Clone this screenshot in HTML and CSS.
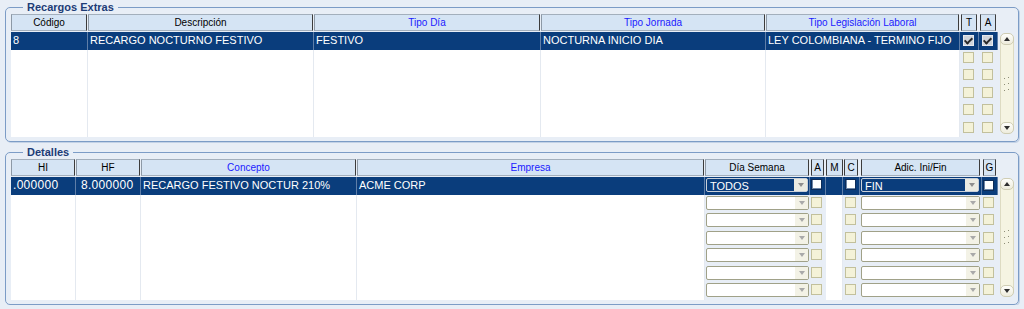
FILE: index.html
```html
<!DOCTYPE html>
<html lang="es">
<head>
    <meta charset="UTF-8">
    <title>Recargos Extras</title>
    <link rel="stylesheet" href="styles.css">
</head>
<body>
    <fieldset class="panel">
        <legend>Recargos Extras</legend>
        <div class="grid extras">
            <div class="head">Código</div>
            <div class="head">Descripción</div>
            <div class="head blue">Tipo Día</div>
            <div class="head blue">Tipo Jornada</div>
            <div class="head blue">Tipo Legislación Laboral</div>
            <div class="head small">T</div>
            <div class="head small">A</div>
            <div></div>
            <div class="scroll">
                <span class="sb up"></span>
                <svg class="grip" width="8" height="18" viewBox="0 0 8 18">
                    <path d="M1 4 L2 3 M5 3 L6 2 M1 10 L2 9 M5 9 L6 8 M1 16 L2 15 M5 15 L6 14" stroke="#8e8e78" stroke-width="1"/>
                </svg>
                <span class="sb down"></span>
            </div>

            <div class="row sel">
                <div class="cell">8</div>
                <div class="cell">RECARGO NOCTURNO FESTIVO</div>
                <div class="cell">FESTIVO</div>
                <div class="cell">NOCTURNA INICIO DIA</div>
                <div class="cell">LEY COLOMBIANA - TERMINO FIJO</div>
                <div class="chk mid"><span class="box checked"></span></div>
                <div class="chk mid"><span class="box checked"></span></div>
            </div>
            <div class="row">
                <div class="cell"></div><div class="cell"></div><div class="cell"></div><div class="cell"></div><div class="cell"></div>
                <div class="chk"><span class="box"></span></div>
                <div class="chk"><span class="box"></span></div>
            </div>
            <div class="row">
                <div class="cell"></div><div class="cell"></div><div class="cell"></div><div class="cell"></div><div class="cell"></div>
                <div class="chk"><span class="box"></span></div>
                <div class="chk"><span class="box"></span></div>
            </div>
            <div class="row">
                <div class="cell"></div><div class="cell"></div><div class="cell"></div><div class="cell"></div><div class="cell"></div>
                <div class="chk"><span class="box"></span></div>
                <div class="chk"><span class="box"></span></div>
            </div>
            <div class="row">
                <div class="cell"></div><div class="cell"></div><div class="cell"></div><div class="cell"></div><div class="cell"></div>
                <div class="chk"><span class="box"></span></div>
                <div class="chk"><span class="box"></span></div>
            </div>
            <div class="row">
                <div class="cell"></div><div class="cell"></div><div class="cell"></div><div class="cell"></div><div class="cell"></div>
                <div class="chk"><span class="box"></span></div>
                <div class="chk"><span class="box"></span></div>
            </div>
        </div>
    </fieldset>

    <fieldset class="panel">
        <legend>Detalles</legend>
        <div class="grid detalles">
            <div class="head">HI</div>
            <div class="head">HF</div>
            <div class="head blue">Concepto</div>
            <div class="head blue">Empresa</div>
            <div class="head">Día Semana</div>
            <div class="head small">A</div>
            <div class="head flat">M</div>
            <div class="head small">C</div>
            <div class="head small">Adic. Ini/Fin</div>
            <div class="head small">G</div>
            <div></div>
            <div class="scroll">
                <span class="sb up"></span>
                <svg class="grip" width="8" height="18" viewBox="0 0 8 18">
                    <path d="M1 4 L2 3 M5 3 L6 2 M1 10 L2 9 M5 9 L6 8 M1 16 L2 15 M5 15 L6 14" stroke="#8e8e78" stroke-width="1"/>
                </svg>
                <span class="sb down"></span>
            </div>

            <div class="row sel">
                <div class="cell num">.000000</div>
                <div class="cell num hf">8.000000</div>
                <div class="cell">RECARGO FESTIVO NOCTUR 210%</div>
                <div class="cell">ACME CORP</div>
                <div class="cbo-cell"><div class="combo"><span class="val">TODOS</span><span class="btn"></span></div></div>
                <div class="chk"><span class="box white"></span></div>
                <div class="cell"></div>
                <div class="chk c"><span class="box white"></span></div>
                <div class="cbo-cell adic"><div class="combo"><span class="val">FIN</span><span class="btn"></span></div></div>
                <div class="chk mid"><span class="box white"></span></div>
            </div>
            <div class="row">
                <div class="cell"></div><div class="cell"></div><div class="cell"></div><div class="cell"></div>
                <div class="cbo-cell"><div class="combo"><span class="val"></span><span class="btn"></span></div></div>
                <div class="chk"><span class="box"></span></div>
                <div class="cell"></div>
                <div class="chk c"><span class="box"></span></div>
                <div class="cbo-cell adic"><div class="combo"><span class="val"></span><span class="btn"></span></div></div>
                <div class="chk"><span class="box"></span></div>
            </div>
            <div class="row">
                <div class="cell"></div><div class="cell"></div><div class="cell"></div><div class="cell"></div>
                <div class="cbo-cell"><div class="combo"><span class="val"></span><span class="btn"></span></div></div>
                <div class="chk"><span class="box"></span></div>
                <div class="cell"></div>
                <div class="chk c"><span class="box"></span></div>
                <div class="cbo-cell adic"><div class="combo"><span class="val"></span><span class="btn"></span></div></div>
                <div class="chk"><span class="box"></span></div>
            </div>
            <div class="row">
                <div class="cell"></div><div class="cell"></div><div class="cell"></div><div class="cell"></div>
                <div class="cbo-cell"><div class="combo"><span class="val"></span><span class="btn"></span></div></div>
                <div class="chk"><span class="box"></span></div>
                <div class="cell"></div>
                <div class="chk c"><span class="box"></span></div>
                <div class="cbo-cell adic"><div class="combo"><span class="val"></span><span class="btn"></span></div></div>
                <div class="chk"><span class="box"></span></div>
            </div>
            <div class="row">
                <div class="cell"></div><div class="cell"></div><div class="cell"></div><div class="cell"></div>
                <div class="cbo-cell"><div class="combo"><span class="val"></span><span class="btn"></span></div></div>
                <div class="chk"><span class="box"></span></div>
                <div class="cell"></div>
                <div class="chk c"><span class="box"></span></div>
                <div class="cbo-cell adic"><div class="combo"><span class="val"></span><span class="btn"></span></div></div>
                <div class="chk"><span class="box"></span></div>
            </div>
            <div class="row">
                <div class="cell"></div><div class="cell"></div><div class="cell"></div><div class="cell"></div>
                <div class="cbo-cell"><div class="combo"><span class="val"></span><span class="btn"></span></div></div>
                <div class="chk"><span class="box"></span></div>
                <div class="cell"></div>
                <div class="chk c"><span class="box"></span></div>
                <div class="cbo-cell adic"><div class="combo"><span class="val"></span><span class="btn"></span></div></div>
                <div class="chk"><span class="box"></span></div>
            </div>
            <div class="row">
                <div class="cell"></div><div class="cell"></div><div class="cell"></div><div class="cell"></div>
                <div class="cbo-cell"><div class="combo"><span class="val"></span><span class="btn"></span></div></div>
                <div class="chk"><span class="box"></span></div>
                <div class="cell"></div>
                <div class="chk c"><span class="box"></span></div>
                <div class="cbo-cell adic"><div class="combo"><span class="val"></span><span class="btn"></span></div></div>
                <div class="chk"><span class="box"></span></div>
            </div>
        </div>
    </fieldset>
</body>
</html>
```

FILE: styles.css
```css
* {
    margin: 0;
    padding: 0;
    box-sizing: border-box;
}
body {
    background: #e8eef6;
    font-family: "Liberation Sans", Arial, sans-serif;
    font-size: 11px;
    color: #000;
}
.panel {
    margin: 0 5px;
    padding: 0 4px 4px 5px;
    border: 1px solid #7c9cc6;
    border-radius: 5px;
    box-shadow: 1px 1px 0 #c3d2e6;
}
.panel + .panel {
    margin-top: 3px;
}
legend {
    margin-left: 12px;
    padding: 0 4px;
    font-size: 11px;
    font-weight: bold;
    line-height: 14px;
    color: #1d3c76;
}
.grid {
    display: grid;
}
.extras {
    grid-template-columns: 77px 226px 227px 225px 194px 19px 19px 16px;
    grid-template-rows: 18px repeat(6, 17.5px);
}
.detalles {
    grid-template-columns: 65px 65px 216px 348px 105px 16px 17px 17px 122px 16px 16px;
    grid-template-rows: 18px repeat(7, 17.5px);
}
.head {
    height: 17px;
    margin-right: 1px;
    background: #d5e4f4;
    border: 1px solid #a3afbc;
    border-left-color: #8d99a6;
    border-right-color: #3c3c3c;
    font-size: 10px;
    line-height: 15px;
    text-align: center;
    white-space: nowrap;
    overflow: hidden;
}
.head.blue {
    color: #1a1aff;
}
.head.small {
    margin: 0 2px 0 1px;
    border-left-color: #3c3c3c;
}
.head.flat {
    margin: 0;
    border-left-color: #3c3c3c;
}
.row {
    display: contents;
}
.cell {
    padding-left: 2px;
    background: #fff;
    border-right: 1px solid #e4e9f0;
    line-height: 17.5px;
    white-space: nowrap;
    overflow: hidden;
}
.cell.num {
    font-size: 12px;
    letter-spacing: 0.3px;
}
.cell.hf {
    padding-left: 5px;
}
.row.sel > div {
    background: #0a3d7c;
    color: #fff;
    border-right: 1px solid #5f7ea8;
}
.chk {
    display: flex;
    align-items: flex-start;
    padding: 2px 0 0 1px;
}
.extras .chk {
    padding-left: 3px;
}
.chk.c {
    padding-left: 2px;
}
.chk.mid {
    align-items: center;
    padding-top: 0;
}
.box {
    width: 11px;
    height: 11px;
    background: #f4f2d8;
    border: 1px solid #c2c09c;
}
.box.checked {
    display: flex;
    align-items: center;
    justify-content: center;
    background: #cfd4db;
    border-color: #e6e9ee;
}
.box.checked::after {
    content: "";
    width: 3px;
    height: 6px;
    margin-top: -2px;
    border: solid #2a2a2a;
    border-width: 0 2px 2px 0;
    transform: rotate(45deg);
}
.box.white {
    background: #fff;
    border: 1px solid #0e2c57;
    box-shadow: inset 1px -1px 0 #6d86a8;
}
.cbo-cell {
    padding: 1px 1px 0 1px;
}
.cbo-cell.adic {
    padding-right: 2px;
}
.combo {
    display: flex;
    height: 14px;
    background: #fff;
    border: 1px solid #a0a188;
    border-radius: 2px;
}
.combo .val {
    flex: 1;
    padding: 1px 0 0 3px;
    line-height: 12px;
    overflow: hidden;
}
.combo .btn {
    width: 13px;
    display: flex;
    align-items: center;
    justify-content: center;
    background: #f3f2e6;
}
.combo .btn::after {
    content: "";
    border-left: 3.5px solid transparent;
    border-right: 3.5px solid transparent;
    border-top: 4px solid #a9a9a9;
}
.row.sel .combo {
    background: #0a3d7c;
    border-color: #c9d0d9;
    color: #fff;
}
.row.sel .combo .btn {
    background: #ebebe2;
}
.row.sel .combo .btn::after {
    border-top-color: #8e8e8e;
}
.scroll {
    grid-column: -2;
    grid-row: 2 / -1;
    margin: 1px 0 3px 2px;
    display: flex;
    flex-direction: column;
    justify-content: space-between;
    align-items: center;
    background: #f5f4e2;
    border-radius: 7px;
    box-shadow: inset 0 0 0 1px #dddbc2;
}
.sb {
    width: 14px;
    height: 12px;
    display: flex;
    align-items: center;
    justify-content: center;
    background: linear-gradient(#fefefb, #eeecdc);
    border: 1px solid #cfcdb4;
    border-radius: 5px;
}
.sb.up::after {
    content: "";
    border-left: 3.5px solid transparent;
    border-right: 3.5px solid transparent;
    border-bottom: 4px solid #2e2e2e;
}
.sb.down::after {
    content: "";
    border-left: 3.5px solid transparent;
    border-right: 3.5px solid transparent;
    border-top: 4px solid #2e2e2e;
}
```
